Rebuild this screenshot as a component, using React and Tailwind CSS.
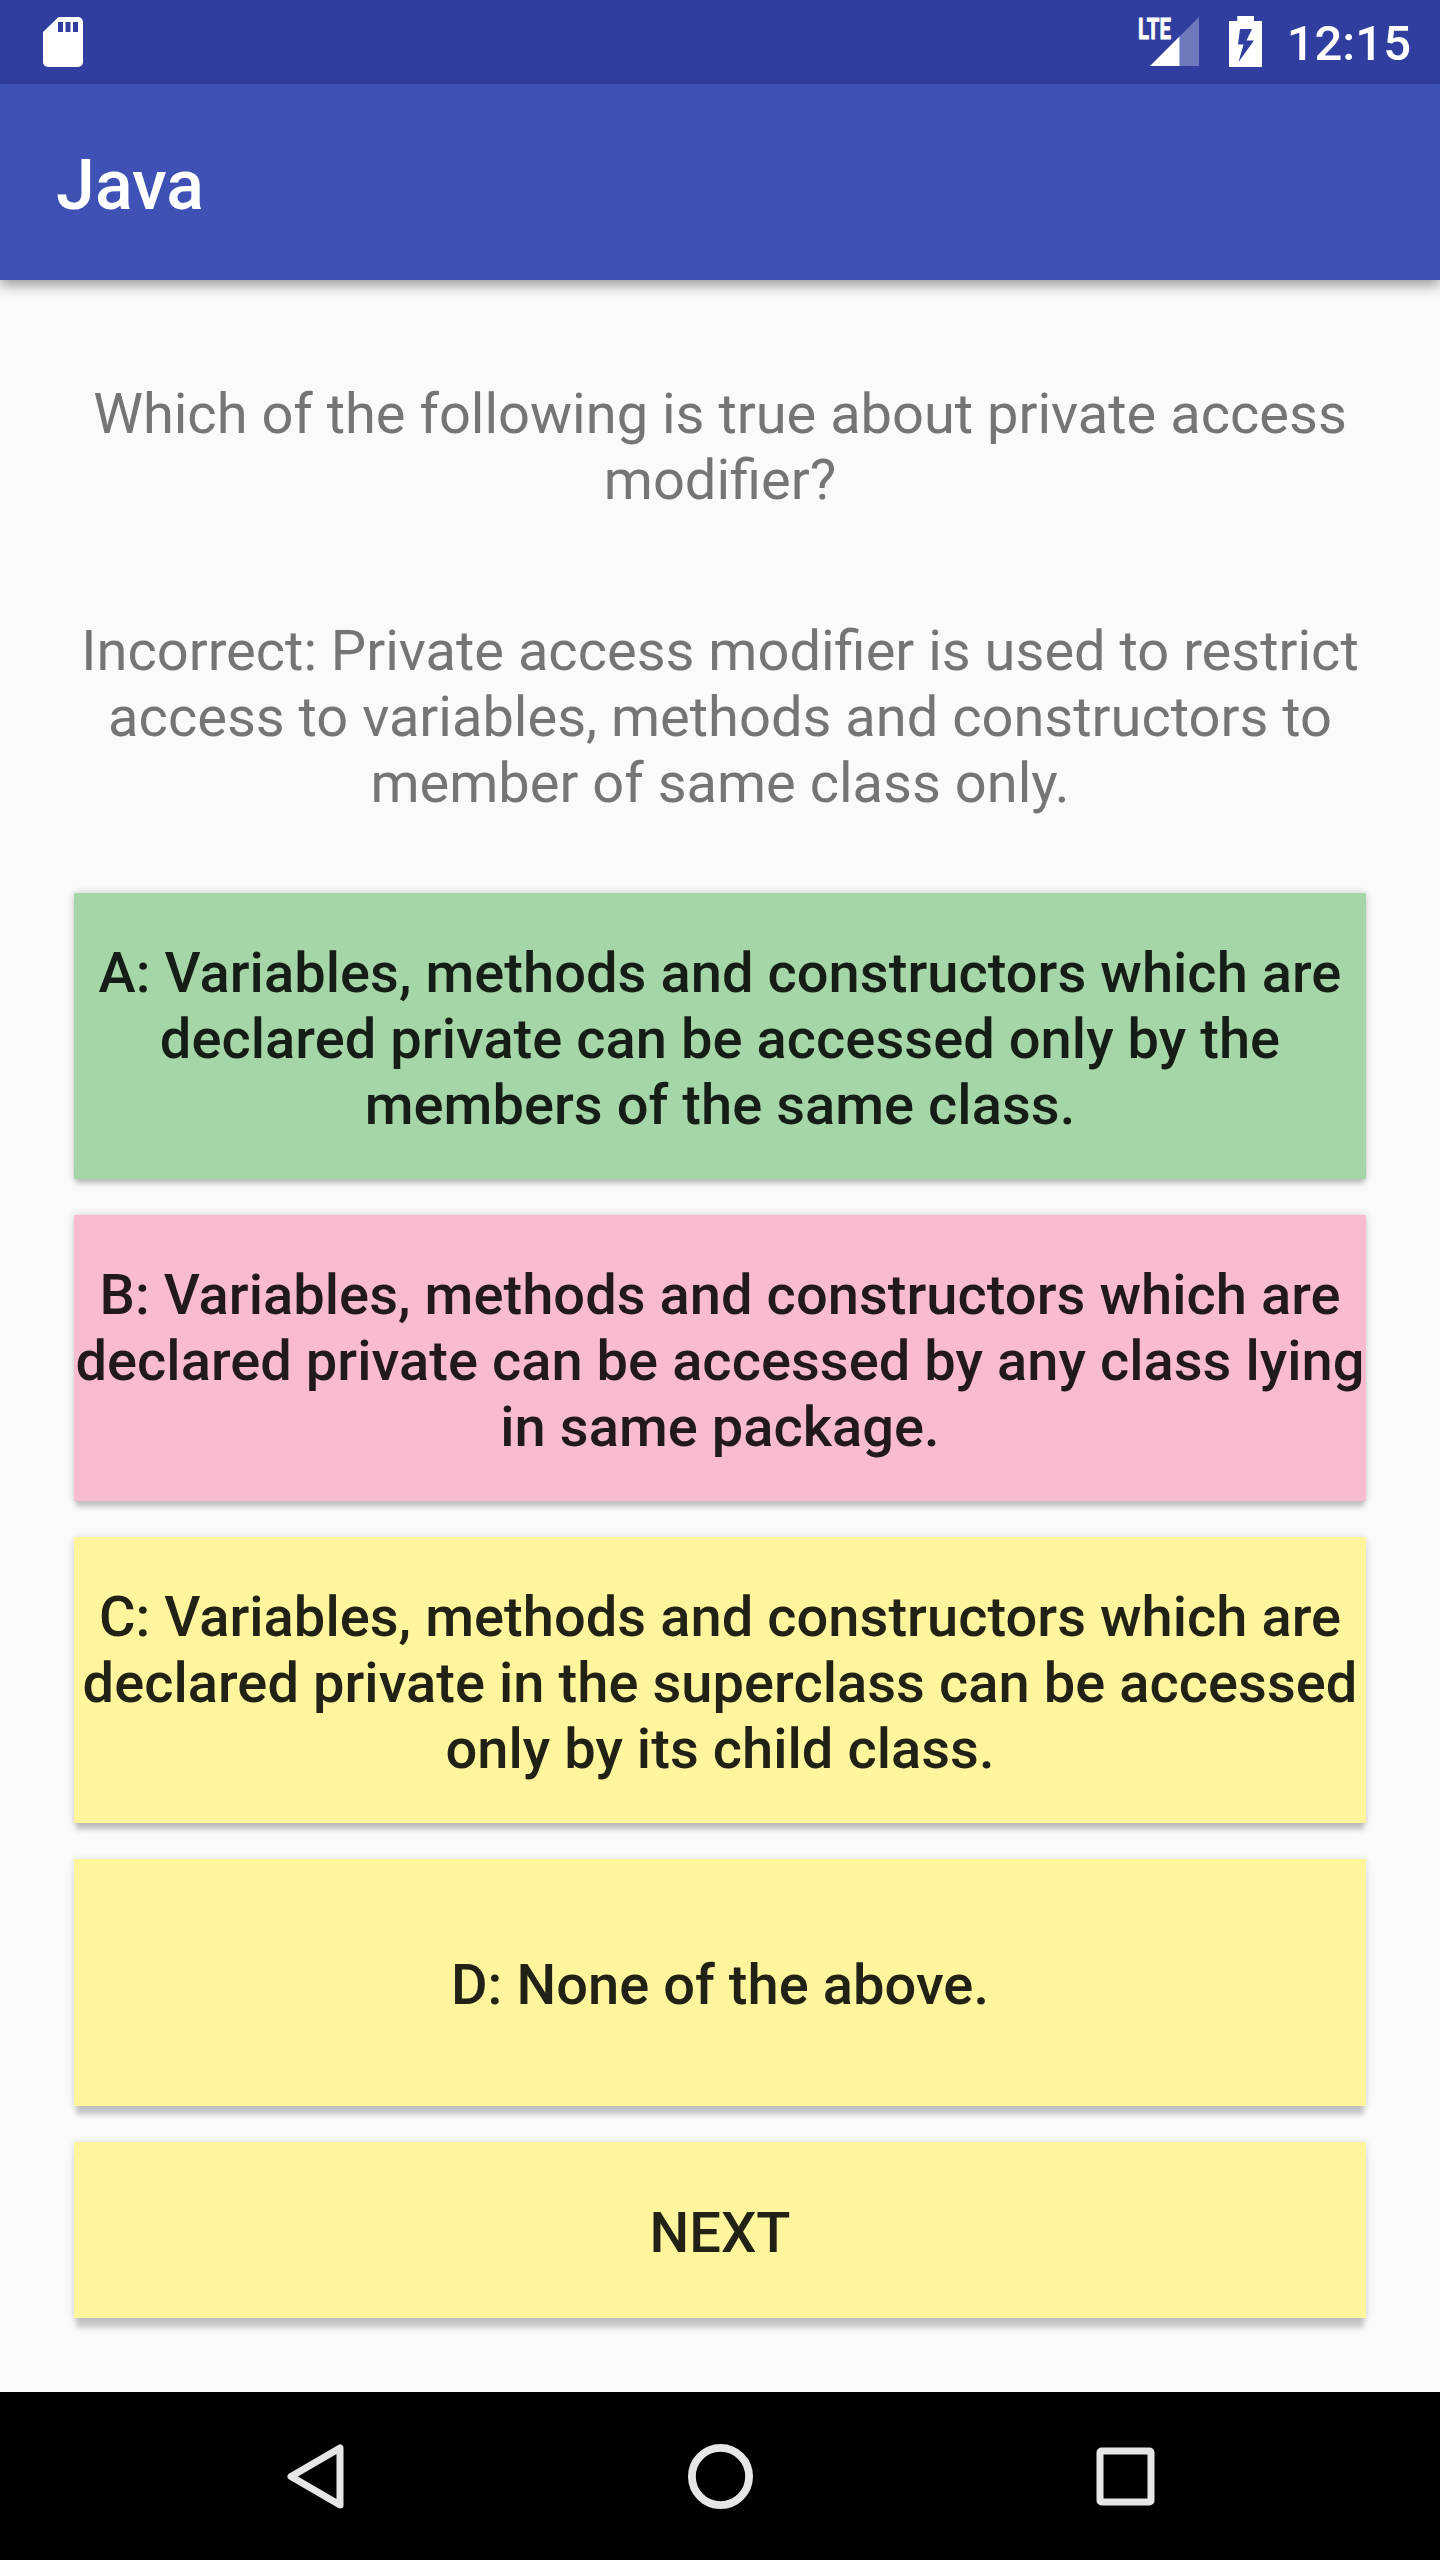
import React from "react";

const answers = [
  {
    lines: [
      "A: Variables, methods and constructors which are",
      "declared private can be accessed only by the",
      "members of the same class.",
    ],
    style:
      "h-[286px] pt-[6px] bg-[#a5d6a7] text-[#161d16] shadow-[0_0_7px_rgba(0,0,0,0.2),0_7px_5px_-2px_rgba(0,0,0,0.17)]",
  },
  {
    lines: [
      "B: Variables, methods and constructors which are",
      "declared private can be accessed by any class lying",
      "in same package.",
    ],
    style:
      "h-[286px] pt-[6px] bg-[#f8bbd0] text-[#21191c] shadow-[0_0_7px_rgba(0,0,0,0.18),0_8px_5px_-2px_rgba(0,0,0,0.18)]",
  },
  {
    lines: [
      "C: Variables, methods and constructors which are",
      "declared private in the superclass can be accessed",
      "only by its child class.",
    ],
    style:
      "h-[286px] pt-[6px] bg-[#fff59d] text-[#222115] shadow-[0_1px_7px_rgba(0,0,0,0.16),0_9px_5px_-2px_rgba(0,0,0,0.18)]",
  },
  {
    lines: ["D: None of the above."],
    style:
      "h-[247px] pt-[5px] bg-[#fff59d] text-[#222115] shadow-[0_1px_7px_rgba(0,0,0,0.14),0_11px_5px_-2px_rgba(0,0,0,0.18)]",
  },
  {
    lines: ["NEXT"],
    style:
      "h-[176px] pt-[6px] bg-[#fff59d] text-[#222115] shadow-[0_1px_7px_rgba(0,0,0,0.14),0_12px_5px_-2px_rgba(0,0,0,0.18)]",
  },
];

function Lines({ lines }) {
  return lines.map((line) => (
    <span key={line} className="block whitespace-nowrap">
      {line}
    </span>
  ));
}

function StatusBar() {
  return (
    <div className="flex h-[84px] shrink-0 items-start bg-[#303f9f] text-white">
      <svg className="mt-[17px] ml-[43px]" width="40" height="50" viewBox="0 0 40 50">
        <path
          fill="#fff"
          fillRule="evenodd"
          d="M15.5 0H35a5 5 0 0 1 5 5V45a5 5 0 0 1-5 5H5a5 5 0 0 1-5-5V15ZM15 5V15H20V5ZM22.5 5V15H27.5V5ZM30 5V15H35V5Z"
        />
      </svg>
      <svg className="ml-auto" width="62" height="84" viewBox="0 0 62 84">
        <path fill="#fff" fillOpacity="0.3" d="M62 17V66H42.500V36.500Z" />
        <path fill="#fff" d="M42.500 36.500V66H13Z" />
        <text
          x="1"
          y="39"
          fill="#fff"
          stroke="#fff"
          strokeWidth="0.8"
          fontFamily="Roboto"
          fontWeight="700"
          fontSize="29"
          textLength="33"
          lengthAdjust="spacingAndGlyphs"
        >
          LTE
        </text>
      </svg>
      <svg className="mt-[16px] ml-[30px]" width="33" height="51" viewBox="0 0 33 51">
        <path
          fill="#fff"
          fillRule="evenodd"
          d="M8.300 0H25V5H33V51H0V5H8.300ZM11 13L9 28.500H14.500L9.500 46L25 24.500H17.500L23 13Z"
        />
      </svg>
      <span className="mt-[15px] mr-[29px] ml-[25px] text-[49px] leading-[58px] font-medium">12:15</span>
    </div>
  );
}

function NavBar() {
  return (
    <div className="flex h-[168px] shrink-0 items-center justify-center gap-[340px] bg-black pt-px pl-px">
      <svg width="65" height="65" viewBox="0 0 65 65" fill="none" stroke="#e6e6e6">
        <path strokeWidth="7" strokeLinejoin="round" d="M57 4V61L8 32.500Z" />
      </svg>
      <svg width="65" height="65" viewBox="0 0 65 65" fill="none" stroke="#e6e6e6">
        <circle cx="32.500" cy="32.500" r="28.600" strokeWidth="7.800" />
      </svg>
      <svg width="65" height="65" viewBox="0 0 65 65" fill="none" stroke="#e6e6e6">
        <rect x="7" y="7" width="51" height="51" rx="1.500" strokeWidth="7" />
      </svg>
    </div>
  );
}

export default function App() {
  return (
    <div className="flex h-[2560px] w-[1440px] flex-col overflow-hidden bg-[#fafafa] font-[Roboto,sans-serif]">
      <StatusBar />
      <header className="flex h-[196px] shrink-0 items-center bg-[#3f51b5] px-[56px] pt-[6px] shadow-[0_6px_12px_rgba(0,0,0,0.36)]">
        <h1 className="text-[70px] leading-[82px] font-medium text-white">Java</h1>
      </header>
      <main className="flex flex-1 flex-col px-[74px] pt-[101px] text-center text-[56px] leading-[66px] text-[#757575]">
        <p>
          <Lines lines={["Which of the following is true about private access", "modifier?"]} />
        </p>
        <p className="mt-[105px]">
          <Lines
            lines={[
              "Incorrect: Private access modifier is used to restrict",
              "access to variables, methods and constructors to",
              "member of same class only.",
            ]}
          />
        </p>
        <div className="mt-[77px] flex flex-col gap-[36px]">
          {answers.map(({ lines, style }) => (
            <button
              key={lines[0]}
              className={`flex flex-col items-center justify-center font-medium tracking-[0.05px] ${style}`}
            >
              <Lines lines={lines} />
            </button>
          ))}
        </div>
      </main>
      <NavBar />
    </div>
  );
}
